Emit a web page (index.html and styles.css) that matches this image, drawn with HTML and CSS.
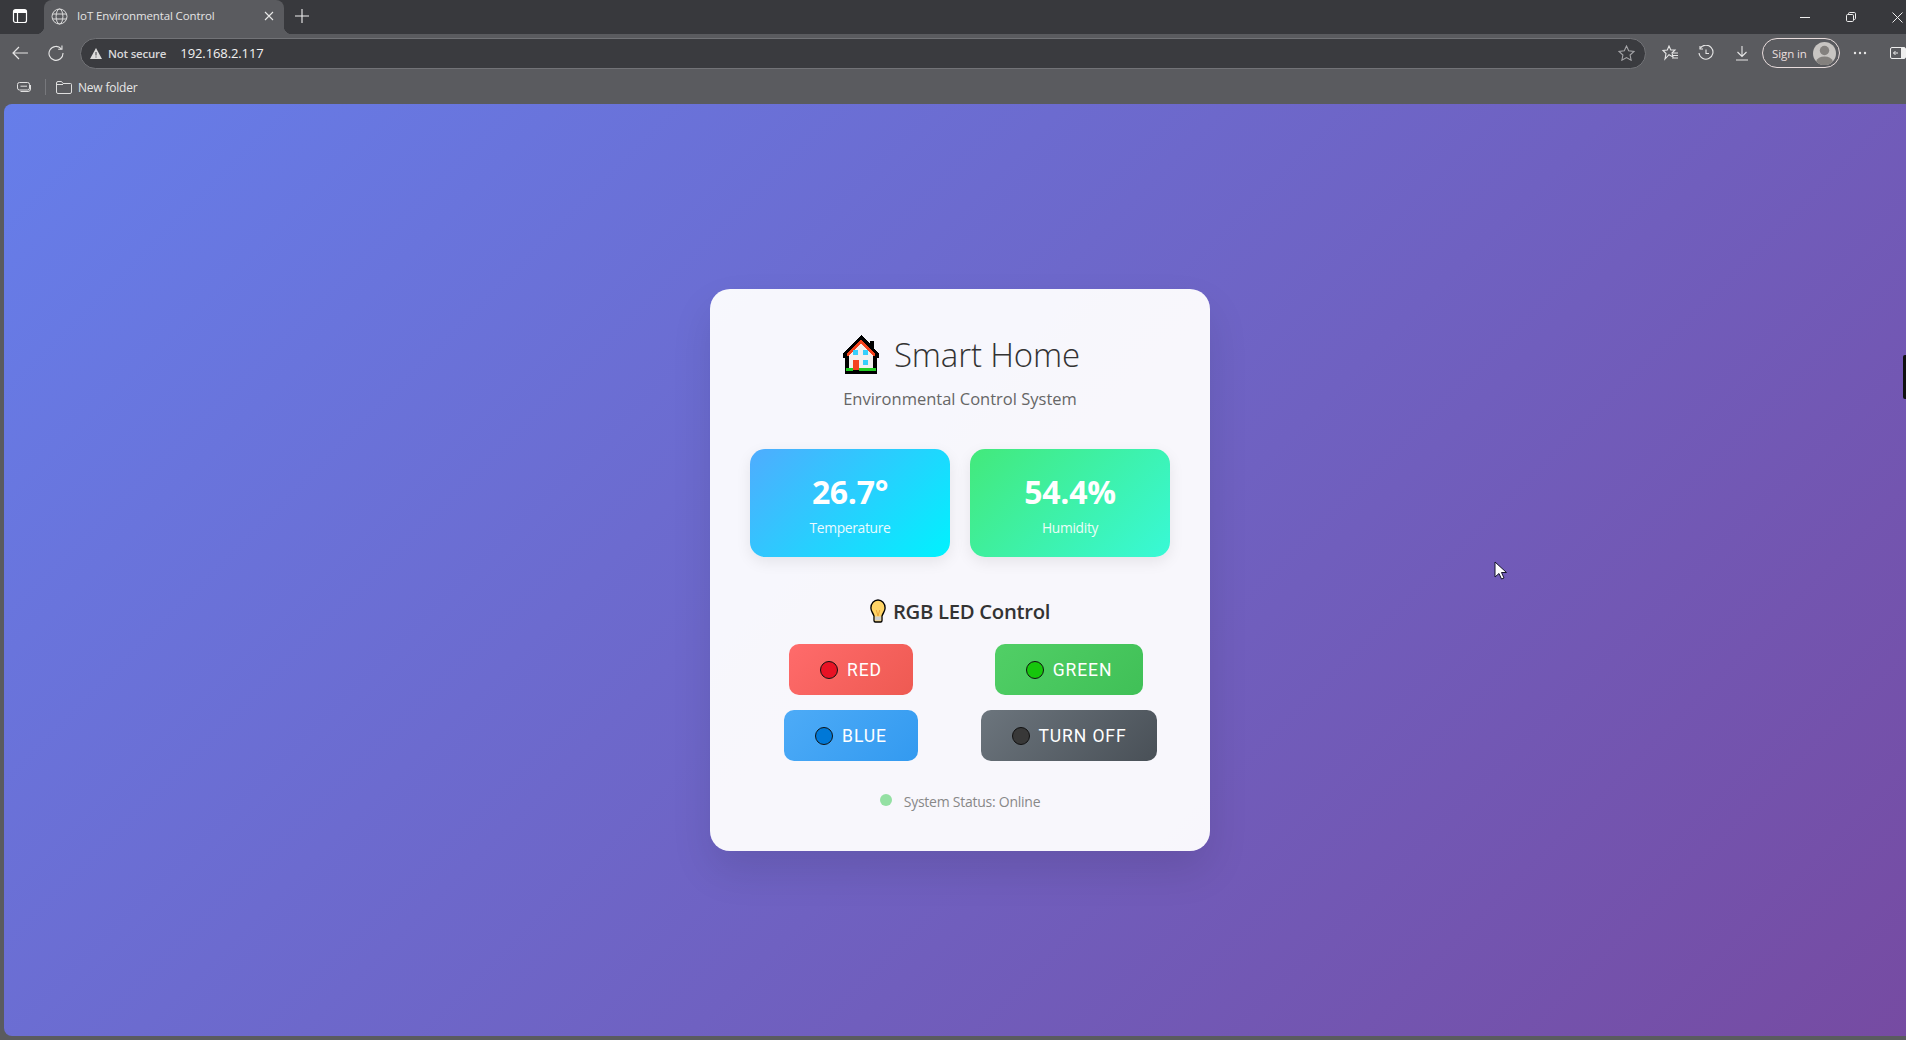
FILE: index.html
```html
<!DOCTYPE html>
<html lang="en">
  <head>
    <meta charset="UTF-8" />
    <title>IoT Environmental Control</title>
    <link rel="stylesheet" href="styles.css">
  </head>
  <body>
    <div class="tabstrip">
      <svg class="tab-toggle" width="16" height="16" viewBox="0 0 16 16"><rect x="1.5" y="1.5" width="13" height="13" rx="2" fill="none" stroke="#fff" stroke-width="1.2"/><path d="M1.5 4.5h13M5.5 4.5v10" fill="none" stroke="#fff" stroke-width="1.2"/><rect x="2" y="2" width="12" height="2.5" fill="#fff"/></svg>
      <div class="tab">
        <svg width="17" height="17" viewBox="0 0 17 17" fill="none" stroke="#dcdcdc" stroke-width="1"><circle cx="8.5" cy="8.5" r="7.5"/><ellipse cx="8.5" cy="8.5" rx="3.4" ry="7.5"/><path d="M1.5 6h14M1.5 11h14"/></svg>
        <span class="tab-title">IoT Environmental Control</span>
        <svg class="tab-close" width="10" height="10" viewBox="0 0 10 10"><path d="M1 1l8 8M9 1l-8 8" stroke="#e8e8e8" stroke-width="1.1"/></svg>
      </div>
      <svg class="new-tab" width="14" height="14" viewBox="0 0 14 14"><path d="M7 0v14M0 7h14" stroke="#f0f0f0" stroke-width="1.1"/></svg>
      <div class="window-btns">
        <svg width="10" height="10" viewBox="0 0 10 10"><path d="M0 5.5h10" stroke="#eee" stroke-width="1"/></svg>
        <svg width="10" height="10" viewBox="0 0 10 10" fill="none" stroke="#eee" stroke-width="1"><rect x=".5" y="2.5" width="7" height="7" rx="1.2"/><path d="M2.5 2.5V1.7q0-1.2 1.2-1.2h4.6q1.2 0 1.2 1.2v4.6q0 1.2-1.2 1.2h-.8"/></svg>
        <svg width="11" height="11" viewBox="0 0 11 11"><path d="M.5.5l10 10M10.500.5l-10 10" stroke="#eee" stroke-width="1"/></svg>
      </div>
    </div>

    <div class="toolbar">
      <svg class="nav-back" width="16" height="14" viewBox="0 0 16 14" fill="none" stroke="#e6e6e6" stroke-width="1.2"><path d="M16 7H1M7 1L1 7l6 6"/></svg>
      <svg class="nav-reload" width="16" height="16" viewBox="0 0 16 16" fill="none" stroke="#e6e6e6" stroke-width="1.1"><path d="M13.300 3.800A7 7 0 1 0 15 8"/><path d="M14 .5v3.800h-3.800"/></svg>
      <div class="address">
        <svg width="12" height="11" viewBox="0 0 12 11"><path d="M6 0l6 11H0z" fill="#dcdcdc"/><path d="M6 4v3.500M6 8.500v1" stroke="#3a3b3f" stroke-width="1"/></svg>
        <span class="not-secure">Not secure</span>
        <span class="url">192.168.2.117</span>
        <svg class="addr-star" width="17" height="16" viewBox="0 0 17 16"><path d="M8.500 1l2.200 4.800 5.300.6-3.900 3.600 1 5.200-4.600-2.600-4.600 2.600 1-5.200L1 6.400l5.300-.6z" fill="none" stroke="#a5a5a8" stroke-width="1.100"/></svg>
      </div>
      <div class="toolbar-right">
        <svg width="17" height="16" viewBox="0 0 17 16" fill="none" stroke="#e6e6e6" stroke-width="1.100"><path d="M7 1l1.800 4h4.200l-3 3 1 4-4-2.300L3 14l1-5.500L1 5.500l4.300-.5z"/><path d="M11 8h5M11 10.500h5M10 13h6"/></svg>
        <svg width="16" height="16" viewBox="0 0 16 16" fill="none" stroke="#e6e6e6" stroke-width="1.100"><path d="M2 3.500A7 7 0 1 1 1 8"/><path d="M2 1v3h3M8 4.500V8.500h3"/></svg>
        <svg width="12" height="16" viewBox="0 0 12 16" fill="none" stroke="#e6e6e6" stroke-width="1.100"><path d="M6 1v10M1.500 7L6 11.500 10.500 7M0 15h12"/></svg>
        <div class="signin">
          <span>Sign in</span>
          <svg class="avatar" width="23" height="23" viewBox="0 0 23 23"><circle cx="11.500" cy="11.500" r="11.500" fill="#c8c5c2"/><circle cx="11.500" cy="8.500" r="4.700" fill="#84817e"/><path d="M3 19.500q2-5 8.500-5t8.500 5a11.500 11.500 0 0 1-17 0z" fill="#84817e"/></svg>
        </div>
        <svg width="14" height="4" viewBox="0 0 14 4" fill="#e6e6e6"><circle cx="2" cy="2" r="1.200"/><circle cx="7" cy="2" r="1.200"/><circle cx="12" cy="2" r="1.200"/></svg>
        <svg class="sidebar-btn" width="16" height="12" viewBox="0 0 16 12"><rect x=".5" y=".5" width="15" height="11" rx="1.500" fill="none" stroke="#eee"/><rect x="11" y="1" width="4" height="10" fill="#eee"/><path d="M8 6H3.500M5.500 4l-2 2 2 2" fill="none" stroke="#eee"/></svg>
      </div>
    </div>

    <div class="favbar">
      <svg width="14" height="10" viewBox="0 0 14 10" fill="none" stroke="#e0e0e0" stroke-width="1"><rect x=".5" y=".5" width="12" height="7.500" rx="2"/><path d="M3.500 4.200h6.500M13.500 3v4q0 2.500-2.500 2.500H3.500"/></svg>
      <span class="fav-sep"></span>
      <svg width="16" height="13" viewBox="0 0 16 13" fill="none" stroke="#dedede" stroke-width="1"><path d="M.5 11V2q0-1.500 1.500-1.500h3.500L7 2.500h7.500q1 0 1 1V11q0 1.500-1.500 1.500H2Q.5 12.500.5 11zM.5 3.500h6.500"/></svg>
      <span class="fav-label">New folder</span>
    </div>

    <main class="page">
      <section class="panel">
        <header class="panel-head">
          <h1>
            <svg class="emoji-house" width="36" height="40" viewBox="0 0 36 40" shape-rendering="crispEdges">
              <path d="M18 1L27 10V7h4v8l5 5v4h-2v16H2V24H0v-4z" fill="#000"/>
              <path d="M18 5L4 20v2h2v14h24V22h2v-2z" fill="#f3f0ee"/>
              <path d="M18 5L4 20v2h2l12-13 12 13h2v-2z" fill="#f5421c"/>
              <rect x="10" y="16" width="5" height="5" fill="#35d0fb"/>
              <rect x="20" y="16" width="5" height="5" fill="#35d0fb"/>
              <rect x="20" y="26" width="5" height="5" fill="#35d0fb"/>
              <rect x="10" y="26" width="6" height="10" fill="#f5421c"/>
              <rect x="3" y="34" width="7" height="3" fill="#22cc22"/>
              <rect x="16" y="34" width="17" height="3" fill="#22cc22"/>
            </svg>
            <span>Smart Home</span>
          </h1>
          <p class="subtitle">Environmental Control System</p>
        </header>

        <div class="stats">
          <div class="stat stat-temp">
            <div class="stat-value">26.7°</div>
            <div class="stat-label">Temperature</div>
          </div>
          <div class="stat stat-hum">
            <div class="stat-value">54.4%</div>
            <div class="stat-label">Humidity</div>
          </div>
        </div>

        <h2 class="led-title">
          <svg width="16" height="24" viewBox="0 0 18 24" fill="none" preserveAspectRatio="none">
            <path d="M9 1a8 8 0 0 0-8 8c0 3 2 4.500 3.500 8v4.500q0 1.500 1.500 1.500h6q1.500 0 1.500-1.500V17C15 13.500 17 12 17 9a8 8 0 0 0-8-8z" fill="#ffd466" stroke="#000" stroke-width="1.500"/>
            <path d="M5.500 17.500h7v4h-7z" fill="#cfcfcf"/>
            <path d="M7 11l2 6 2-6" stroke="#e8a33a" stroke-width="1"/>
          </svg>
          <span>RGB LED Control</span>
        </h2>

        <div class="controls">
          <button class="led-btn btn-red"><span class="led-dot dot-red"></span>RED</button>
          <button class="led-btn btn-green"><span class="led-dot dot-green"></span>GREEN</button>
          <button class="led-btn btn-blue"><span class="led-dot dot-blue"></span>BLUE</button>
          <button class="led-btn btn-off"><span class="led-dot dot-off"></span>TURN OFF</button>
        </div>

        <div class="status">
          <span class="status-dot"></span>
          <span>System Status: Online</span>
        </div>
      </section>

      <svg class="cursor" width="13" height="20" viewBox="0 0 13 20"><path d="M1 1v15l4-3.500L7.500 18l2.500-1-2.500-5.500H12.500z" fill="#fff" stroke="#15152a" stroke-width="1"/></svg>
      <div class="edge-handle"></div>
    </main>
  </body>
</html>
```

FILE: styles.css
```css
* {
  box-sizing: border-box;
}

html,
body {
  height: 100%;
  margin: 0;
}

body {
  display: flex;
  flex-direction: column;
  width: 1906px;
  height: 1040px;
  overflow: hidden;
  background-color: #5a5b5f;
  font-family: "Open Sans", "Noto Sans", sans-serif;
}

/* browser chrome */
.tabstrip {
  display: flex;
  align-items: center;
  height: 34px;
  background-color: #38393d;
  padding-left: 12px;
}

.tab-toggle {
  margin: 0 16px 2px 0;
}

.tab {
  position: relative;
  display: flex;
  align-items: center;
  width: 240px;
  height: 34px;
  padding: 0 10px 2px 7px;
  background-color: #5a5b5f;
  border-radius: 8px 8px 0 0;
}

.tab::before,
.tab::after {
  content: "";
  position: absolute;
  bottom: 0;
  width: 8px;
  height: 8px;
}

.tab::before {
  left: -8px;
  background: radial-gradient(circle at 0 0, #38393d 8px, #5a5b5f 8.5px);
}

.tab::after {
  right: -8px;
  background: radial-gradient(circle at 100% 0, #38393d 8px, #5a5b5f 8.5px);
}

.tab-title {
  margin: 0 0 2px 9px;
  flex: 1;
  font-size: 11.5px;
  letter-spacing: -0.12px;
  color: #e4e4e4;
}

.new-tab {
  margin: 0 0 2px 11px;
}

.window-btns {
  display: flex;
  align-items: center;
  gap: 36px;
  margin-left: auto;
  margin-right: 3px;
}

.toolbar {
  display: flex;
  align-items: center;
  height: 36px;
  padding: 2px 0 0 12px;
}

.nav-reload {
  margin-left: 20px;
}

.address {
  display: flex;
  align-items: center;
  width: 1571px;
  height: 31px;
  margin-left: 16px;
  padding: 0 10px 0 9px;
  border: 1px solid #727377;
  border-radius: 16px;
  background-color: #3a3b3f;
}

.not-secure {
  margin-left: 6px;
  font-size: 11.5px;
  font-weight: 600;
  letter-spacing: -0.2px;
  color: #d8d8da;
}

.url {
  margin-left: 14px;
  font-size: 13px;
  letter-spacing: -0.1px;
  color: #f2f2f2;
}

.addr-star {
  margin-left: auto;
}

.toolbar-right {
  display: flex;
  align-items: center;
  margin-left: 16px;
}

.toolbar-right > svg:nth-child(2) {
  margin-left: 19px;
}

.toolbar-right > svg:nth-child(3) {
  margin-left: 22px;
}

.signin {
  display: flex;
  align-items: center;
  justify-content: space-between;
  width: 78px;
  height: 30px;
  margin-left: 14px;
  padding: 0 3px 0 9px;
  border: 1px solid #e8dcdc;
  border-radius: 15px;
  font-size: 11.5px;
  letter-spacing: -0.1px;
  color: #eadfdf;
}

.toolbar-right > svg:nth-child(5) {
  margin-left: 13px;
}

.sidebar-btn {
  margin-left: 23px;
}

.favbar {
  display: flex;
  align-items: center;
  height: 34px;
  padding-left: 17px;
}

.fav-sep {
  width: 1px;
  height: 16px;
  margin: 0 10px 0 14px;
  background-color: #77787c;
}

.fav-label {
  margin-left: 6px;
  font-size: 12px;
  letter-spacing: -0.2px;
  color: #e6e6e6;
}

/* page */
.page {
  position: relative;
  display: flex;
  align-items: flex-start;
  justify-content: center;
  height: 932px;
  margin-left: 4px;
  padding: 185px 0 0;
  border-radius: 8px 0 0 8px;
  background: linear-gradient(135deg, #667eea 0%, #764ba2 100%);
}

.panel {
  width: 500px;
  height: 562px;
  margin-left: 10px;
  padding: 44px 40px 40px;
  border-radius: 20px;
  background: rgba(255, 255, 255, 0.95);
  box-shadow: 0 20px 40px rgba(0, 0, 0, 0.1);
}

.panel-head {
  text-align: center;
}

h1 {
  display: flex;
  align-items: center;
  justify-content: center;
  gap: 15px;
  height: 42px;
  margin: 0;
  padding-left: 3px;
  font-size: 33px;
  font-weight: 300;
  letter-spacing: -0.15px;
  color: #333;
}

.subtitle {
  margin: 13px 0 0;
  font-size: 16.5px;
  line-height: 22px;
  color: #666;
}

.stats {
  display: grid;
  grid-template-columns: 200px 200px;
  gap: 20px;
  margin-top: 39px;
}

.stat {
  height: 108px;
  padding-top: 21px;
  border-radius: 15px;
  color: white;
  text-align: center;
  box-shadow: 0 5px 15px rgba(0, 0, 0, 0.08);
}

.stat-temp {
  background: linear-gradient(135deg, #4facfe 0%, #00f2fe 100%);
}

.stat-hum {
  background: linear-gradient(135deg, #43e97b 0%, #38f9d7 100%);
}

.stat-value {
  font-size: 32px;
  line-height: 44px;
  font-weight: 700;
  letter-spacing: -0.3px;
}

.stat-label {
  margin-top: 4px;
  font-size: 13.8px;
  line-height: 19px;
  letter-spacing: -0.3px;
  opacity: 0.9;
}

.led-title {
  display: flex;
  align-items: center;
  justify-content: center;
  gap: 7px;
  height: 30px;
  margin: 39px 0 0;
  font-size: 20.3px;
  font-weight: 600;
  letter-spacing: -0.3px;
  color: #333;
}

.controls {
  display: grid;
  grid-template-columns: 200px 200px;
  gap: 15px 18px;
  justify-content: center;
  justify-items: center;
  margin-top: 18px;
}

.led-btn {
  display: flex;
  align-items: center;
  gap: 9px;
  height: 51px;
  padding: 0 31px;
  border: none;
  border-radius: 10px;
  font-family: "Roboto", sans-serif;
  font-size: 17.5px;
  font-weight: 400;
  letter-spacing: 0.9px;
  color: white;
  cursor: pointer;
}

.btn-red {
  background: linear-gradient(135deg, #ff6b6b, #ee5a52);
}

.btn-green {
  background: linear-gradient(135deg, #51cf66, #40c057);
}

.btn-blue {
  background: linear-gradient(135deg, #4dabf7, #339af0);
}

.btn-off {
  background: linear-gradient(135deg, #6c757d, #495057);
}

.led-dot {
  flex: none;
  width: 18px;
  height: 18px;
  border: 1px solid #111;
  border-radius: 50%;
}

.dot-red {
  background-color: #e81224;
}

.dot-green {
  background-color: #16c60c;
}

.dot-blue {
  background-color: #0078d7;
}

.dot-off {
  background-color: #383838;
}

.status {
  display: flex;
  align-items: center;
  justify-content: center;
  gap: 12px;
  margin-top: 31px;
  font-size: 14px;
  line-height: 19px;
  letter-spacing: -0.25px;
  color: #888;
}

.status-dot {
  width: 12px;
  height: 12px;
  margin-top: -3px;
  border-radius: 50%;
  background-color: #94e0a3;
}

/* things lying on top of the page */
.cursor {
  position: absolute;
  left: 1490px;
  top: 457px;
}

.edge-handle {
  position: absolute;
  right: 0;
  top: 251px;
  width: 3px;
  height: 44px;
  border-radius: 2px 0 0 2px;
  background-color: #111;
}
```
